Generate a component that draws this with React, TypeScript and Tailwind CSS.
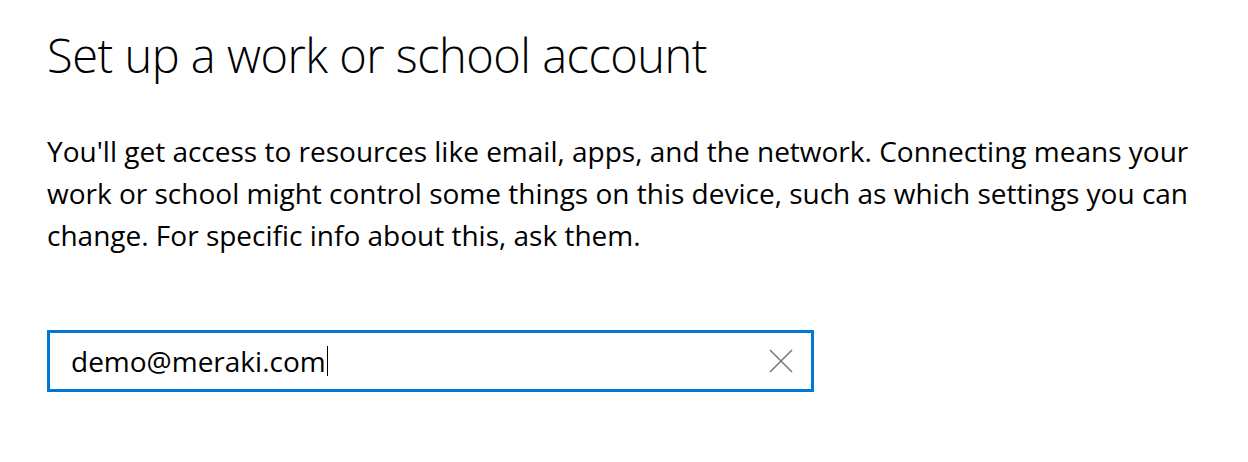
import React from "react";

const App: React.FC = () => {
  return (
    <div
      className="w-[1248px] h-[462px] bg-white text-black pl-[47px] pt-[25px]"
      style={{ fontFamily: '"Open Sans", "Noto Sans", sans-serif' }}
    >
      <h1 className="text-[47px] font-light leading-[60px] tracking-[-0.5px]">
        Set up a work or school account
      </h1>

      <p className="mt-[45px] text-[28px] leading-[42px] whitespace-nowrap text-[#000]">
        You'll get access to resources like email, apps, and the network. Connecting means your
        <br />
        work or school might control some things on this device, such as which settings you can
        <br />
        change. For specific info about this, ask them.
      </p>

      <div className="mt-[74px] w-[767px] h-[62px] border-[3px] border-[#0078d7] flex items-center pl-[21px] pr-[18px]">
        <span className="text-[28px] leading-none text-black">demo@meraki.com</span>
        <span className="w-px h-[30px] bg-black ml-px" />
        <div className="flex-1" />
        <svg width="24" height="24" viewBox="0 0 24 24" className="text-[#7a7a7a]">
          <path d="M1 1 L23 23 M23 1 L1 23" stroke="currentColor" strokeWidth="1.6" fill="none" />
        </svg>
      </div>
    </div>
  );
};

export default App;
